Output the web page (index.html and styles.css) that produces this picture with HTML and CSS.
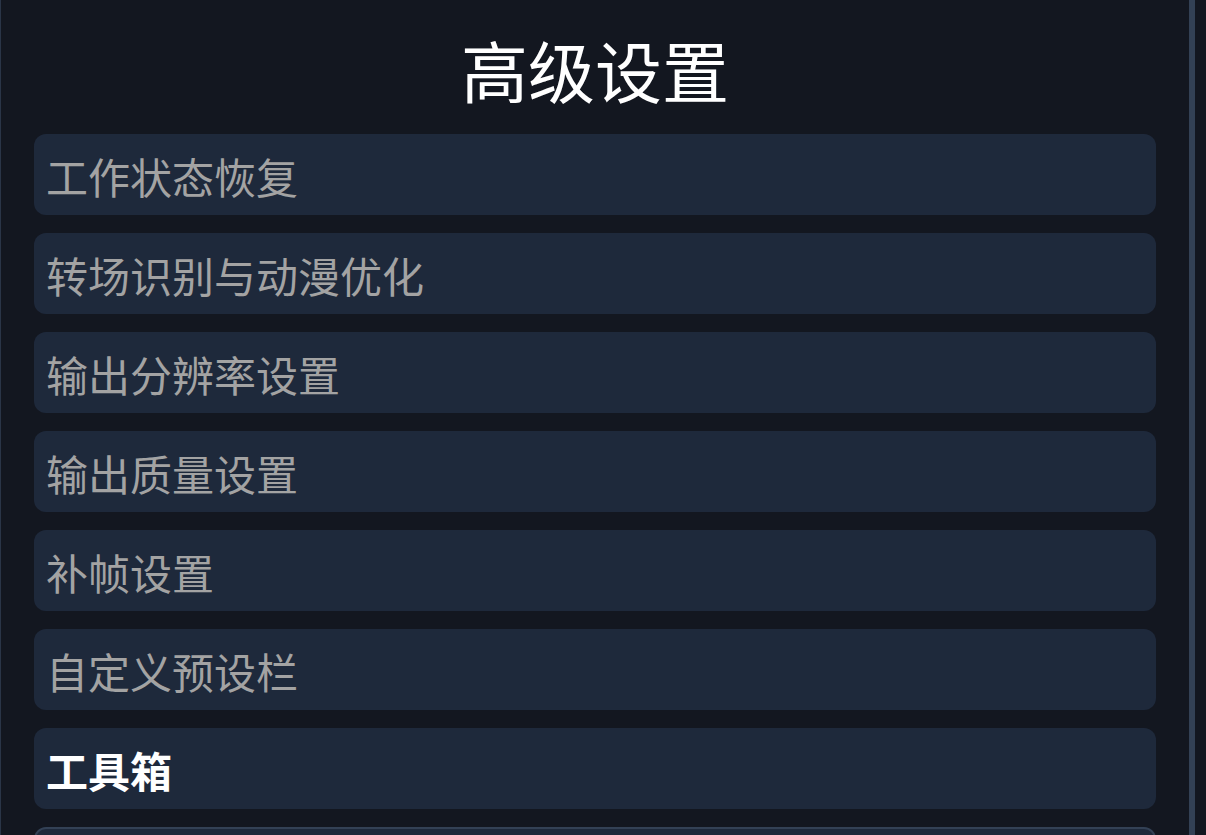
FILE: index.html
```html
<!DOCTYPE html>
<html lang="zh-CN">
<head>
<meta charset="utf-8">
<title>高级设置</title>
<link rel="stylesheet" href="styles.css">
</head>
<body>
<div class="page">
  <main class="panel">
    <h1 class="title">高级设置</h1>
    <ul class="menu">
      <li class="item">工作状态恢复</li>
      <li class="item">转场识别与动漫优化</li>
      <li class="item">输出分辨率设置</li>
      <li class="item">输出质量设置</li>
      <li class="item">补帧设置</li>
      <li class="item">自定义预设栏</li>
      <li class="item item-active">工具箱</li>
      <li class="item item-outlined"></li>
    </ul>
  </main>
</div>
</body>
</html>
```

FILE: styles.css
```css
html, body {
  margin: 0;
  padding: 0;
  height: 100%;
  overflow: hidden;
  background: #131720;
}

body {
  font-family: "Noto Sans CJK SC", "Noto Sans", sans-serif;
}

.page {
  display: flex;
  height: 835px;
  overflow: hidden;
}

.panel {
  box-sizing: border-box;
  width: 1195px;
  height: 100%;
  overflow: hidden;
  border-left: 1px solid #2a3547;
  border-right: 6px solid #334155;
  padding: 0 33px;
}

.title {
  margin: 0;
  padding-top: 29px;
  height: 134px;
  box-sizing: border-box;
  font-size: 67px;
  line-height: 80px;
  font-weight: 400;
  color: #ffffff;
  text-align: center;
}

.menu {
  list-style: none;
  margin: 0;
  padding: 0;
  display: flex;
  flex-direction: column;
  gap: 18px;
}

.item {
  box-sizing: border-box;
  height: 81px;
  flex-shrink: 0;
  background: #1e293b;
  border-radius: 12px;
  padding: 0 12px;
  font-size: 42px;
  line-height: 84px;
  color: #a3a3a3;
  white-space: nowrap;
}

.item-active {
  color: #ffffff;
  font-weight: 700;
}

.item-outlined {
  border: 2px solid #334155;
}
```
